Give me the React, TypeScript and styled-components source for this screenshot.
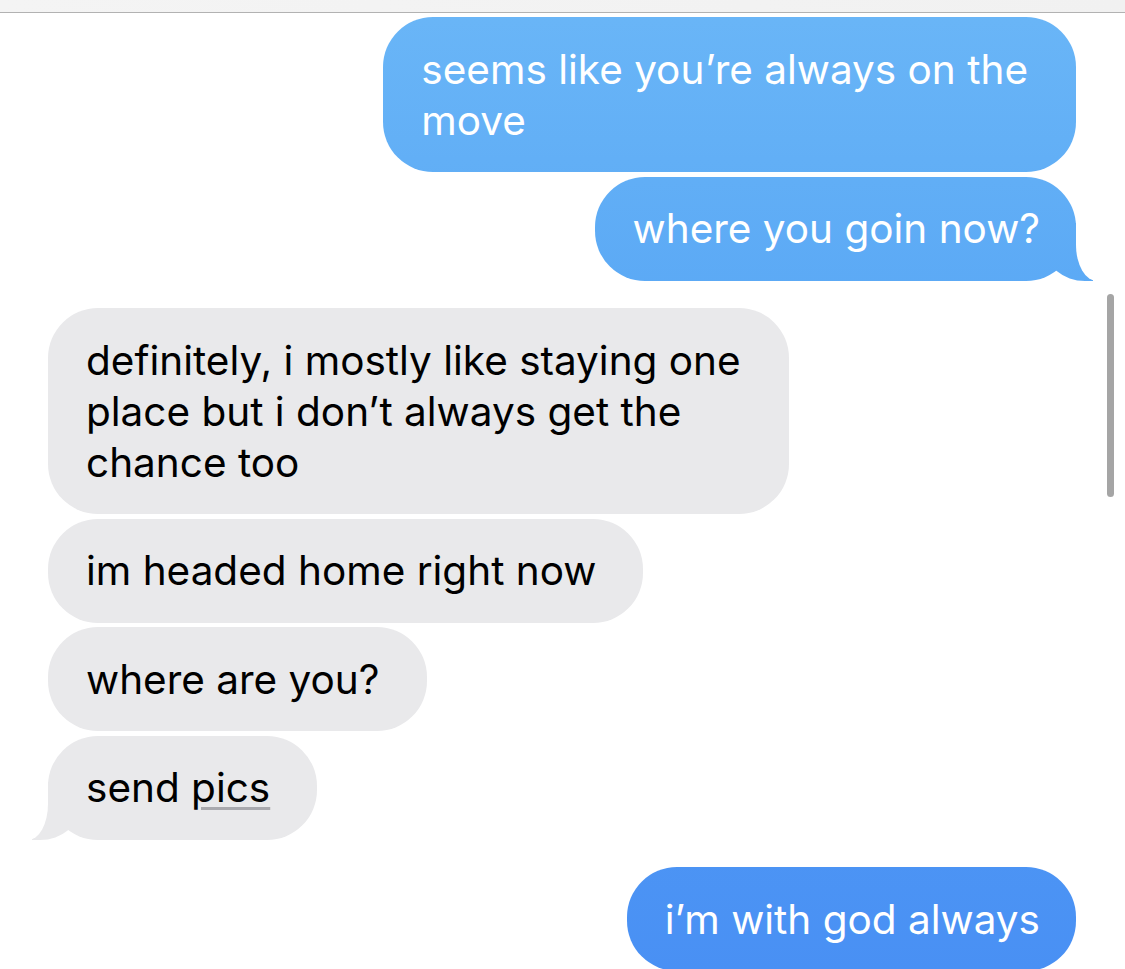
import React from "react";
import styled, { createGlobalStyle, css } from "styled-components";

type Side = "me" | "them";

const GlobalStyle = createGlobalStyle`
  html, body {
    margin: 0;
    padding: 0;
    background: #fff;
    overflow: hidden;
  }
  body {
    font-family: Inter, "Noto Sans", "DejaVu Sans", sans-serif;
    -webkit-font-smoothing: antialiased;
  }
`;

const meFill = css`
  background: linear-gradient(to bottom, #6ab6f7 0px, #5aa8f5 320px, #4990f4 969px);
  background-attachment: fixed;
`;

const App: React.FC = () => {
  return (
    <>
      <GlobalStyle />
      <Page>
        <TopBar />
        <Thread>
          <Group side="me">
            <Bubble side="me" wrapped>
              seems like you’re always on the
              <br />
              move
            </Bubble>
            <Bubble side="me" tail>
              where you goin now?
            </Bubble>
          </Group>

          <Group side="them">
            <Bubble side="them" wrapped>
              definitely, i mostly like staying one
              <br />
              place but i don’t always get the
              <br />
              chance too
            </Bubble>
            <Bubble side="them">im headed home right now</Bubble>
            <Bubble side="them">where are you?</Bubble>
            <Bubble side="them" tail>
              send <Link>pics</Link>
            </Bubble>
          </Group>

          <Group side="me">
            <Bubble side="me">i’m with god always</Bubble>
          </Group>
        </Thread>
        <Scrollbar />
      </Page>
    </>
  );
};

export default App;

const Page = styled.div`
  height: 969px;
  overflow: hidden;
`;

const TopBar = styled.div`
  height: 12px;
  background: linear-gradient(to right, #f4f4f4, #f1f1f1);
  border-bottom: 1px solid #b2b2b2;
`;

const Thread = styled.div`
  display: flex;
  flex-direction: column;
  gap: 27.5px;
  padding: 4px 49px 0 48px;
`;

const Group = styled.div<{ side: Side }>`
  display: flex;
  flex-direction: column;
  gap: 4.5px;
  align-items: ${(p) => (p.side === "me" ? "flex-end" : "flex-start")};
`;

const Bubble = styled.div<{ side: Side; tail?: boolean; wrapped?: boolean }>`
  position: relative;
  box-sizing: border-box;
  padding: 26.5px 36px 26.5px 38px;
  border-radius: 50px;
  font-size: 40.5px;
  line-height: 51px;
  white-space: nowrap;
  color: ${(p) => (p.side === "me" ? "#fff" : "#000")};
  ${(p) =>
    p.side === "me"
      ? meFill
      : css`
          background: #e9e9eb;
          padding-right: 47px;
        `}
  ${(p) =>
    p.wrapped &&
    css`
      padding-right: 48px;
    `}

  ${(p) =>
    p.tail &&
    p.side === "me" &&
    css`
      &::before {
        content: "";
        position: absolute;
        bottom: 0;
        right: -17px;
        width: 48px;
        height: 58px;
        ${meFill}
        border-bottom-left-radius: 40px 34px;
      }
      &::after {
        content: "";
        position: absolute;
        bottom: 0;
        right: -60px;
        width: 60px;
        height: 62px;
        background: #fff;
        border-bottom-left-radius: 21px 36px;
      }
    `}

  ${(p) =>
    p.tail &&
    p.side === "them" &&
    css`
      &::before {
        content: "";
        position: absolute;
        bottom: 0;
        left: -16px;
        width: 48px;
        height: 58px;
        background: #e9e9eb;
        border-bottom-right-radius: 40px 34px;
      }
      &::after {
        content: "";
        position: absolute;
        bottom: 0;
        left: -60px;
        width: 60px;
        height: 62px;
        background: #fff;
        border-bottom-right-radius: 20px 36px;
      }
    `}
`;

const Link = styled.span`
  text-decoration: underline;
  text-decoration-color: #a9a9ae;
  text-decoration-thickness: 3px;
  text-underline-offset: 5px;
`;

const Scrollbar = styled.div`
  position: fixed;
  top: 294px;
  right: 11px;
  width: 7px;
  height: 203px;
  border-radius: 4px;
  background: #a5a5a5;
`;
